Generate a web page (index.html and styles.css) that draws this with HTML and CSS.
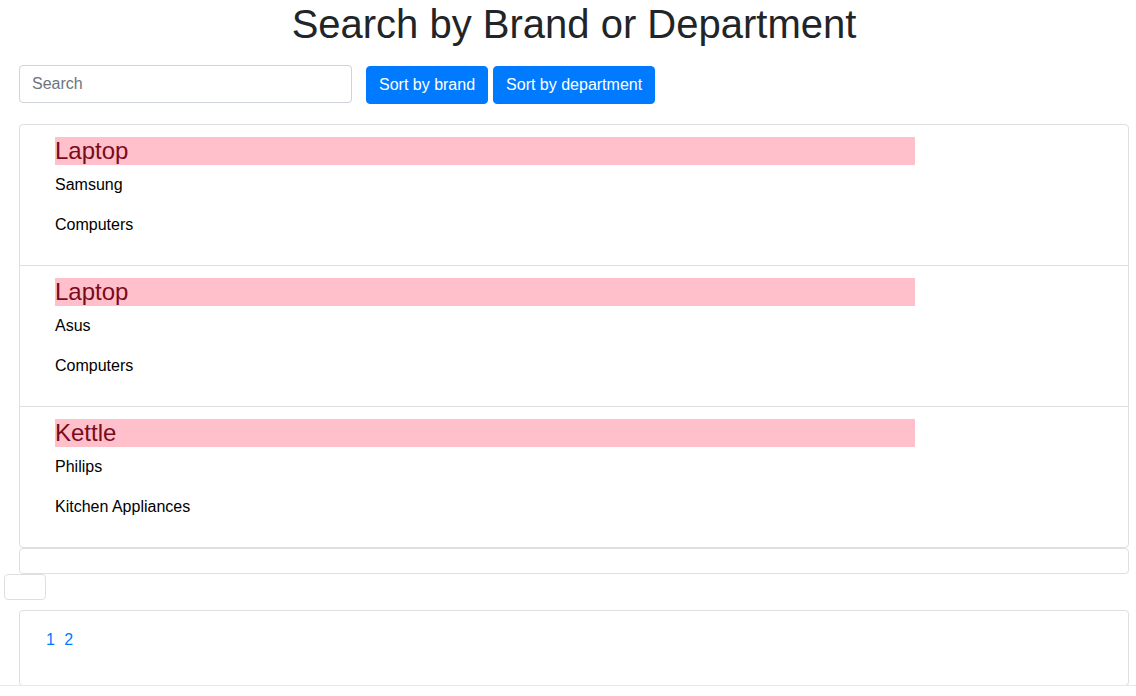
FILE: index.html
```html
<!DOCTYPE html>
<html>
<head>
<meta charset="utf-8">
<link rel="stylesheet" href="styles.css">
</head>
<body>
<div class="container">
  <h1 class="title">Search by Brand or Department</h1>
  <div class="toolbar">
    <input class="search" type="text" placeholder="Search">
    <div class="btns">
      <button class="btn">Sort by brand</button>
      <button class="btn">Sort by department</button>
    </div>
  </div>
  <ul class="list">
    <li class="item">
      <h4 class="name">Laptop</h4>
      <p>Samsung</p>
      <p>Computers</p>
    </li>
    <li class="item">
      <h4 class="name">Laptop</h4>
      <p>Asus</p>
      <p>Computers</p>
    </li>
    <li class="item">
      <h4 class="name">Kettle</h4>
      <p>Philips</p>
      <p>Kitchen Appliances</p>
    </li>
  </ul>
  <div class="empty-card"></div>
</div>
<div class="small-box"></div>
<div class="container">
  <div class="pager">
    <a href="#">1</a>
    <a href="#">2</a>
  </div>
</div>
<div class="rule"></div>
</body>
</html>
```
FILE: styles.css
```css
* { box-sizing: border-box; }
body {
  margin: 0;
  font-family: "Liberation Sans", Arial, Helvetica, sans-serif;
  font-size: 16px;
  line-height: 1.5;
  color: #212529;
  background: #fff;
}
.container {
  margin-left: 19px;
  width: 1110px;
}
.title {
  margin: 0 0 17px;
  font-size: 40px;
  font-weight: 400;
  line-height: 48px;
  text-align: center;
  color: #212529;
}
.toolbar {
  display: flex;
  align-items: flex-start;
  gap: 14px;
}
.search {
  width: 333px;
  height: 38px;
  padding: 6px 12px;
  border: 1px solid #ced4da;
  border-radius: 4px;
  font-family: inherit;
  font-size: 16px;
  color: #495057;
}
.search::placeholder { color: #6c757d; }
.btns { display: flex; gap: 5px; margin-top: 1px; }
.btn {
  height: 38px;
  padding: 6px 12px;
  border: 1px solid #007bff;
  border-radius: 4px;
  background: #007bff;
  color: #fff;
  font-family: inherit;
  font-size: 16px;
  line-height: 24px;
}
.list {
  list-style: none;
  margin: 20px 0 0;
  padding: 0;
  border: 1px solid #dfdfdf;
  border-radius: 4px;
}
.item {
  padding: 12px 20px 12px 35px;
  border-top: 1px solid #dfdfdf;
}
.item:first-child { border-top: 0; }
.name {
  width: 860px;
  margin: 0 0 8px;
  background: #ffc0cb;
  color: #7a0a1c;
  font-size: 24px;
  font-weight: 400;
  line-height: 28px;
}
.item p {
  margin: 0 0 16px;
  color: #000;
}
.empty-card {
  height: 26px;
  border: 1px solid #dfdfdf;
  border-radius: 4px;
}
.small-box {
  margin-left: 4px;
  width: 42px;
  height: 26px;
  border: 1px solid #dfdfdf;
  border-radius: 4px;
}
.pager {
  margin-top: 10px;
  height: 76px;
  padding: 17px 26px;
  border: 1px solid #dfdfdf;
  border-radius: 4px;
}
.pager a {
  color: #007bff;
  text-decoration: none;
  margin-right: 5px;
}
.rule {
  height: 0;
  border-top: 1px solid #e8e8e8;
  margin-top: -1px;
}
```
